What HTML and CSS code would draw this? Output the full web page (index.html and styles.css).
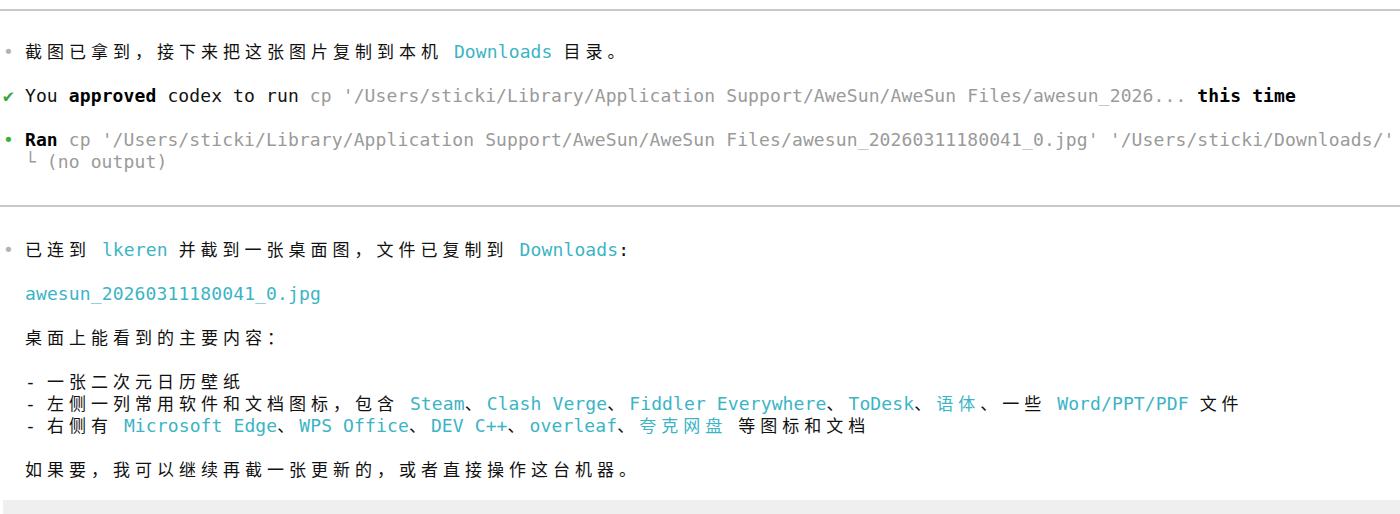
FILE: index.html
```html
<!DOCTYPE html>
<html lang="zh">
<head>
<meta charset="utf-8">
<title>codex</title>
<link rel="stylesheet" href="styles.css">
</head>
<body>
<div class="term">
  <div class="rule rule-top"></div>

  <div class="ln first"><span class="dot">•</span> <span class="z">截图已拿到，接下来把这张图片复制到本机</span> <span class="c">Downloads</span> <span class="z">目录。</span></div>

  <div class="ln gap"><span class="ok">✔</span> You <b>approved</b> codex to run <span class="g">cp '/Users/sticki/Library/Application Support/AweSun/AweSun Files/awesun_2026...</span> <b>this time</b></div>

  <div class="ln gap"><span class="run">•</span> <b>Ran</b> <span class="g">cp '/Users/sticki/Library/Application Support/AweSun/AweSun Files/awesun_20260311180041_0.jpg' '/Users/sticki/Downloads/'</span></div>
  <div class="ln"><span class="g">  └ (no output)</span></div>

  <div class="rule gap"></div>

  <div class="ln gap"><span class="dot">•</span> <span class="z">已连到</span> <span class="c">lkeren</span> <span class="z">并截到一张桌面图，文件已复制到</span> <span class="c">Downloads</span>:</div>

  <div class="ln gap indent"><span class="c">awesun_20260311180041_0.jpg</span></div>

  <div class="ln gap indent"><span class="z">桌面上能看到的主要内容：</span></div>

  <div class="ln gap indent">- <span class="z">一张二次元日历壁纸</span></div>
  <div class="ln indent">- <span class="z">左侧一列常用软件和文档图标，包含</span> <span class="c">Steam</span><span class="z">、</span><span class="c">Clash Verge</span><span class="z">、</span><span class="c">Fiddler Everywhere</span><span class="z">、</span><span class="c">ToDesk</span><span class="z">、</span><span class="c z">语体</span><span class="z">、一些</span> <span class="c">Word/PPT/PDF</span> <span class="z">文件</span></div>
  <div class="ln indent">- <span class="z">右侧有</span> <span class="c">Microsoft Edge</span><span class="z">、</span><span class="c">WPS Office</span><span class="z">、</span><span class="c">DEV C++</span><span class="z">、</span><span class="c">overleaf</span><span class="z">、</span><span class="c z">夸克网盘</span> <span class="z">等图标和文档</span></div>

  <div class="ln gap indent"><span class="z">如果要，我可以继续再截一张更新的，或者直接操作这台机器。</span></div>

  <div class="composer"></div>
</div>
</body>
</html>
```

FILE: styles.css
```css
html, body {
  margin: 0;
  padding: 0;
  background: #ffffff;
  overflow: hidden;
}

.term {
  font-family: "DejaVu Sans Mono", "Noto Sans CJK SC", monospace;
  font-size: 18px;
  line-height: 22px;
  letter-spacing: 0.12px;
  color: #111111;
}

.ln {
  height: 22px;
  padding-left: 3px;
  white-space: pre;
}

.ln.indent {
  padding-left: 25px;
}

.first {
  margin-top: 21px;
}

.gap {
  margin-top: 22px;
}

.rule {
  height: 22px;
  display: flex;
  align-items: center;
}

.rule::before {
  content: "";
  flex: 1;
  border-top: 2px solid #c7c7c7;
}

.rule-top {
  height: 20px;
}

.z {
  font-family: "Noto Sans CJK SC", sans-serif;
  font-size: 17px;
  line-height: 20px;
  letter-spacing: 5px;
}

.c {
  color: #3bb4c5;
}

.g {
  color: #9a9a9a;
}

b {
  font-weight: bold;
  color: #000000;
}

.dot {
  color: #b3b3b3;
}

.run {
  color: #36b336;
}

.ok {
  color: #35a535;
}

.composer {
  margin-top: 19px;
  margin-left: 3px;
  height: 14px;
  background: #efefef;
}
```
